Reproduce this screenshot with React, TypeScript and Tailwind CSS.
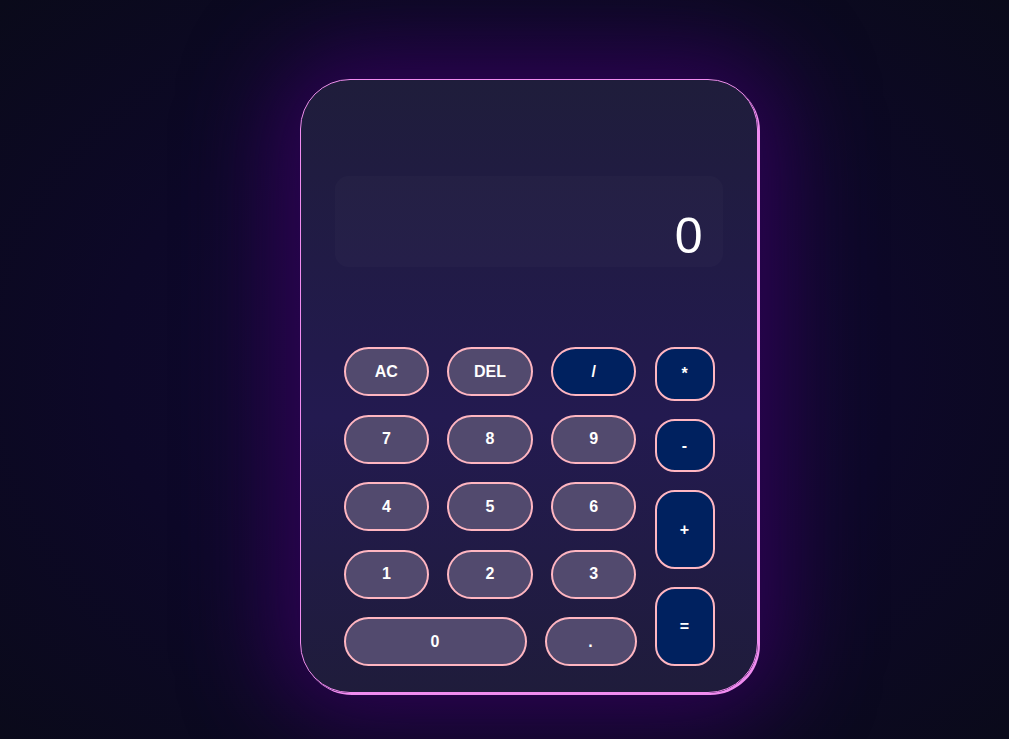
const btn =
  "flex items-center justify-center rounded-full border-2 border-[#ffb6c1] text-white font-bold text-[16px] h-[49px]"
const num = `${btn} bg-[#524a6e]`
const op = "flex items-center justify-center rounded-[20px] border-2 border-[#ffb6c1] bg-[#00215f] text-white font-bold text-[16px] w-[60px]"

export default function App() {
  const rows = [
    ["AC", "DEL", "/"],
    ["7", "8", "9"],
    ["4", "5", "6"],
    ["1", "2", "3"],
  ]

  return (
    <div
      className="min-h-screen w-full flex justify-center pl-[48px] bg-[radial-gradient(ellipse_at_center,#110a33_0%,#0d0828_55%,#0a0a1a_100%)]"
      style={{ fontFamily: '"Liberation Sans", Arial, sans-serif' }}
    >
      <div className="mt-[79px] w-[458px] h-[614px] rounded-[50px] border border-[#f08cf0] bg-[linear-gradient(180deg,#1f1d3b_0%,#221a4c_45%,#231a50_55%,#1f1c3b_100%)] shadow-[2px_2px_0_#f08cf0,0_0_90px_25px_rgba(58,0,100,0.75)] flex flex-col px-[34px] pt-[96px] pb-[26px]">
        {/* display */}
        <div className="h-[91px] rounded-[14px] bg-white/[0.018] flex items-end justify-end pr-[20px] pb-[4px]">
          <span className="text-white text-[50px] font-normal leading-none mb-[2px]">0</span>
        </div>

        <div className="mt-auto flex gap-[18px] px-[9px]">
          {/* left block */}
          <div className="flex flex-col gap-[18.5px] w-[294px]">
            {rows.map((r, i) => (
              <div key={i} className="grid grid-cols-3 gap-[18px]">
                {r.map((k) => (
                  <button key={k} className={k === "/" ? `${btn} bg-[#00215f]` : num}>
                    {k}
                  </button>
                ))}
              </div>
            ))}
            <div className="flex gap-[18px]">
              <button className={`${num} w-[183px]`}>0</button>
              <button className={`${num} w-[92px]`}>.</button>
            </div>
          </div>

          {/* operators */}
          <div className="flex flex-col gap-[18px]">
            <button className={`${op} h-[54px]`}>*</button>
            <button className={`${op} h-[53px]`}>-</button>
            <button className={`${op} h-[79px]`}>+</button>
            <button className={`${op} h-[79px]`}>=</button>
          </div>
        </div>
      </div>
    </div>
  )
}
